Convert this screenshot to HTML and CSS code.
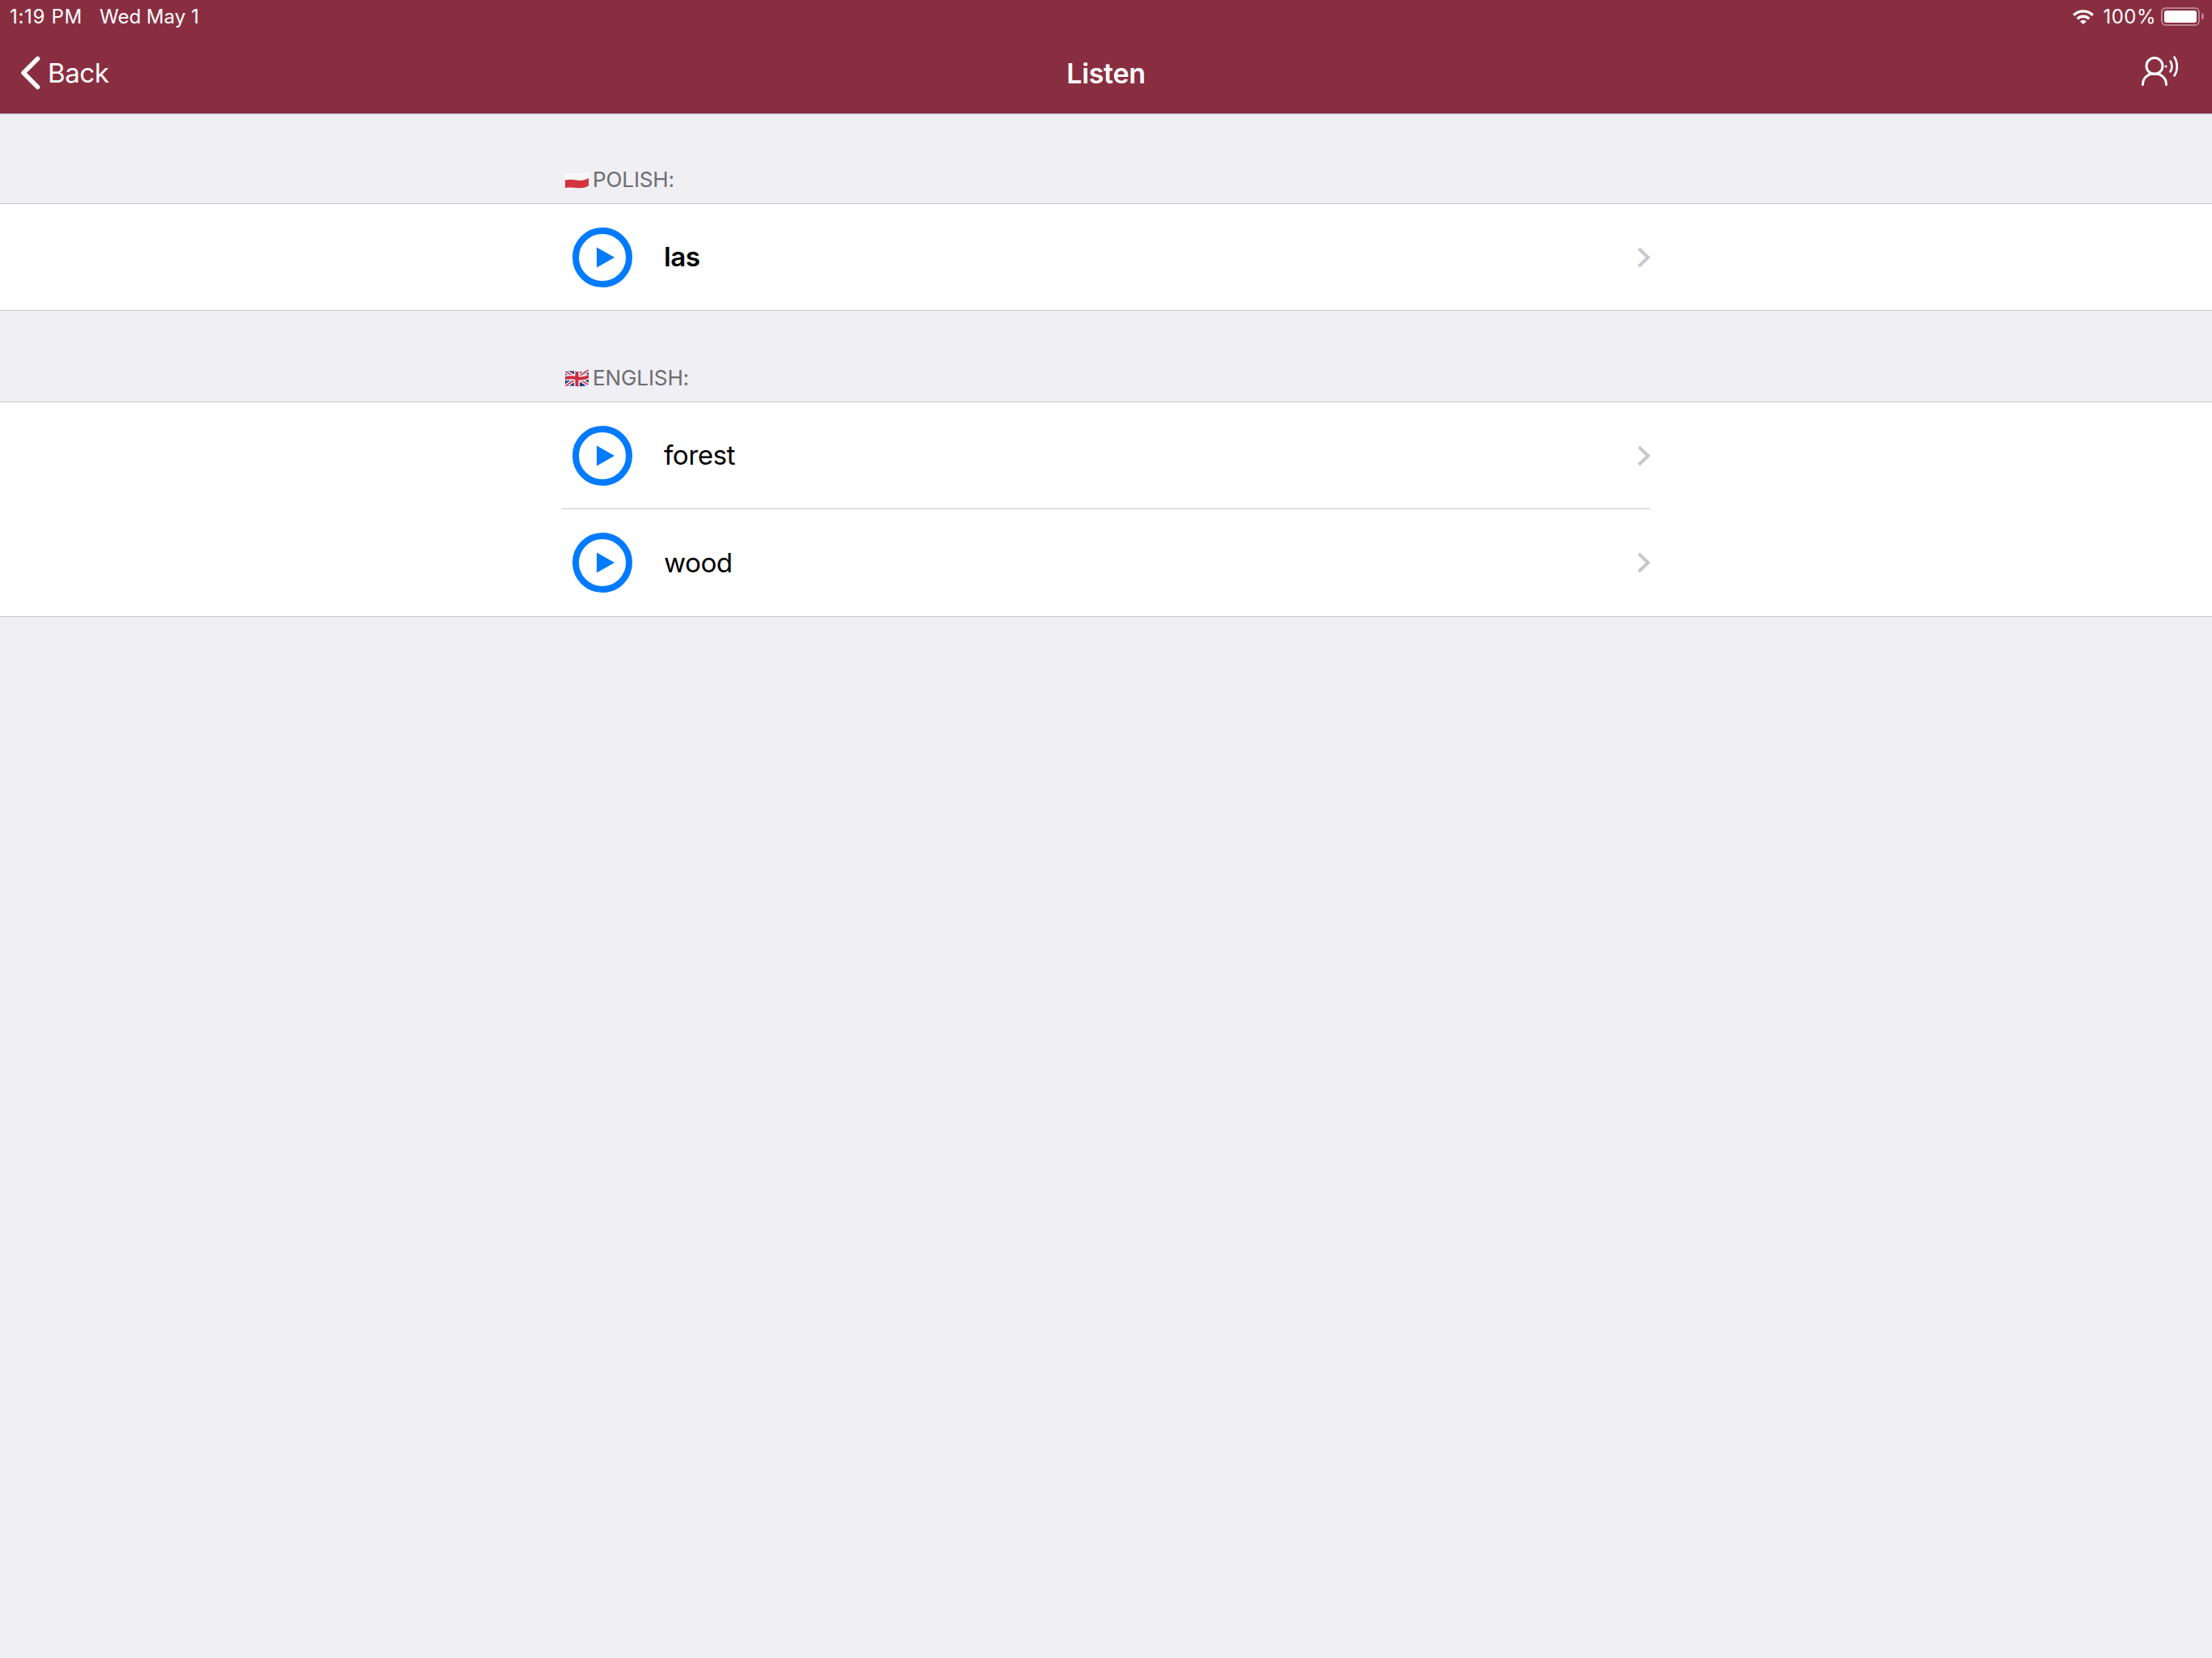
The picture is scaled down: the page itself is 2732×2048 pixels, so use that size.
FILE: index.html
```html
<!DOCTYPE html>
<html lang="en">
<head>
    <meta charset="UTF-8">
    <meta name="viewport" content="width=device-width, initial-scale=1.0">
    <title>Listen</title>
    <link rel="stylesheet" href="styles.css">
</head>
<body>
    <header class="topbar">
        <div class="status">
            <span class="time">1:19 PM</span>
            <span class="date">Wed May 1</span>
            <span class="status-right">
                <svg class="wifi" width="28" height="20" viewBox="0 0 28 20">
                    <path d="M1 7.500a18.500 18.500 0 0 1 26 0l-2.300 2.400a15.200 15.200 0 0 0-21.400 0z" fill="#fff"/>
                    <path d="M5.600 12a12 12 0 0 1 16.800 0l-2.300 2.400a8.700 8.700 0 0 0-12.200 0z" fill="#fff"/>
                    <path d="M10 16.500a5.700 5.700 0 0 1 8 0l-4 3.500z" fill="#fff"/>
                </svg>
                <span class="battery-text">100%</span>
                <span class="battery"><span class="battery-fill"></span></span>
                <span class="battery-nub"></span>
            </span>
        </div>
        <nav class="navbar">
            <a class="back">
                <svg width="26" height="42" viewBox="0 0 26 42">
                    <path d="M22.500 3.500 5 21l17.500 17.500" fill="none" stroke="#fff" stroke-width="5.500" stroke-linecap="round" stroke-linejoin="round"/>
                </svg>
                Back
            </a>
            <h1>Listen</h1>
            <div class="nav-right">
                <svg width="46" height="40" viewBox="0 0 46 40">
                    <circle cx="17" cy="13.500" r="10" fill="none" stroke="#fff" stroke-width="3"/>
                    <path d="M2.500 36.500c0-8 6-13.500 14.500-13.500s14.500 5.500 14.500 13.500" fill="none" stroke="#fff" stroke-width="3" stroke-linecap="round"/>
                    <circle cx="31" cy="14" r="1.500" fill="#fff"/>
                    <path d="M36.500 7.500c2.500 4 2.500 9 0 13" fill="none" stroke="#fff" stroke-width="2.600" stroke-linecap="round"/>
                    <path d="M41.500 2.500c4.500 7 4.500 16 0 23" fill="none" stroke="#fff" stroke-width="2.600" stroke-linecap="round"/>
                </svg>
            </div>
        </nav>
    </header>

    <section class="group">
        <h2 class="group-title">
            <svg class="flag" width="30" height="22" viewBox="0 0 30 22">
                <path d="M0 3c5-1 9-1 14 0s10 .5 15-2.500v9c-5 3-10 3-15 2.500s-9-1-14 0z" fill="#f9f6f6"/>
                <path d="M0 11.500c5-1 9-1 14 0s10 .5 15-2.500v9.500c-5 3-10 3-15 2.500s-9-1-14 0z" fill="#d5343f"/>
            </svg>
            POLISH:
        </h2>
        <ul class="rows">
            <li class="row">
                <div class="row-inner">
                    <svg class="play" width="74" height="74" viewBox="0 0 74 74">
                        <circle cx="37" cy="37" r="33" fill="none" stroke="#007aff" stroke-width="8"/>
                        <path d="M30 24.500 52 37 30 49.500z" fill="#007aff"/>
                    </svg>
                    <span class="word word-main">las</span>
                    <svg class="chevron" width="16" height="26" viewBox="0 0 16 26">
                        <path d="M2 2l11.500 11L2 24" fill="none" stroke="#c7c7cc" stroke-width="4"/>
                    </svg>
                </div>
            </li>
        </ul>
    </section>

    <section class="group group-next">
        <h2 class="group-title">
            <svg class="flag" width="30" height="22" viewBox="0 0 30 22">
                <clipPath id="ukClip">
                    <path d="M0 3c5-1 9-1 14 0s10 .5 15-2.500v18c-5 3-10 3-15 2.500s-9-1-14 0z"/>
                </clipPath>
                <g clip-path="url(#ukClip)">
                    <rect width="30" height="22" fill="#23397c"/>
                    <path d="M-1 2 30 20M30 0-1 22" stroke="#f4f1f1" stroke-width="4.500"/>
                    <path d="M-1 2 30 20M30 0-1 22" stroke="#cf2b3f" stroke-width="1.500"/>
                    <path d="M14.500 0v22M0 11c5-1 9-1 14 0s10 .5 15-2" fill="none" stroke="#f4f1f1" stroke-width="7"/>
                    <path d="M14.500 0v22M0 11c5-1 9-1 14 0s10 .5 15-2" fill="none" stroke="#cf2b3f" stroke-width="4"/>
                </g>
            </svg>
            ENGLISH:
        </h2>
        <ul class="rows">
            <li class="row">
                <div class="row-inner has-line">
                    <svg class="play" width="74" height="74" viewBox="0 0 74 74">
                        <circle cx="37" cy="37" r="33" fill="none" stroke="#007aff" stroke-width="8"/>
                        <path d="M30 24.500 52 37 30 49.500z" fill="#007aff"/>
                    </svg>
                    <span class="word">forest</span>
                    <svg class="chevron" width="16" height="26" viewBox="0 0 16 26">
                        <path d="M2 2l11.500 11L2 24" fill="none" stroke="#c7c7cc" stroke-width="4"/>
                    </svg>
                </div>
            </li>
            <li class="row">
                <div class="row-inner row-last">
                    <svg class="play" width="74" height="74" viewBox="0 0 74 74">
                        <circle cx="37" cy="37" r="33" fill="none" stroke="#007aff" stroke-width="8"/>
                        <path d="M30 24.500 52 37 30 49.500z" fill="#007aff"/>
                    </svg>
                    <span class="word">wood</span>
                    <svg class="chevron" width="16" height="26" viewBox="0 0 16 26">
                        <path d="M2 2l11.500 11L2 24" fill="none" stroke="#c7c7cc" stroke-width="4"/>
                    </svg>
                </div>
            </li>
        </ul>
    </section>
</body>
</html>
```

FILE: styles.css
```css
html, body {
    margin: 0;
    padding: 0;
}
body {
    min-height: 2048px;
    background-color: #efeff4;
    font-family: Inter, "Liberation Sans", sans-serif;
    color: #000;
}
.topbar {
    height: 140px;
    background-color: #892e41;
    border-bottom: 1px solid #a9a9b2;
    color: #fff;
}
.status {
    height: 40px;
    display: flex;
    align-items: center;
    padding: 0 10px 0 12px;
    font-size: 24px;
}
.time {
    letter-spacing: 0.7px;
}
.date {
    margin-left: 21px;
}
.status-right {
    margin-left: auto;
    display: flex;
    align-items: center;
}
.battery-text {
    margin-left: 10px;
    letter-spacing: 0.5px;
}
.battery {
    box-sizing: border-box;
    width: 48px;
    height: 23px;
    margin-left: 6px;
    padding: 2px;
    border: 2px solid rgba(255, 255, 255, 0.4);
    border-radius: 6px;
    display: flex;
}
.battery-fill {
    flex: 1;
    background-color: #fff;
    border-radius: 3px;
}
.battery-nub {
    width: 3px;
    height: 8px;
    margin-left: 2px;
    background-color: rgba(255, 255, 255, 0.4);
    border-radius: 0 3px 3px 0;
}
.navbar {
    height: 100px;
    display: grid;
    grid-template-columns: 1fr auto 1fr;
    align-items: center;
}
.back {
    display: flex;
    align-items: center;
    gap: 9px;
    padding-left: 24px;
    font-size: 33px;
    letter-spacing: -0.4px;
}
.navbar h1 {
    margin: 0;
    font-size: 34px;
    font-weight: 600;
    letter-spacing: -0.3px;
}
.nav-right {
    display: flex;
    justify-content: flex-end;
    padding-right: 42px;
    margin-bottom: 4px;
}
.group-title {
    height: 110px;
    box-sizing: border-box;
    margin: 0;
    padding: 0 0 8px 698px;
    display: flex;
    align-items: flex-end;
    gap: 4px;
    font-size: 26px;
    font-weight: 400;
    line-height: 42px;
    letter-spacing: -0.1px;
    color: #6d6d72;
}
.group-next .group-title {
    height: 112px;
}
.flag {
    margin-bottom: 10px;
}
.rows {
    list-style: none;
    margin: 0;
    padding: 0;
    background-color: #fff;
    border-top: 1px solid #c8c7cc;
    border-bottom: 1px solid #c8c7cc;
}
.row {
    padding: 0 694px;
}
.row-inner {
    height: 131px;
    display: flex;
    align-items: center;
    padding-left: 13px;
}
.has-line {
    border-bottom: 1px solid #c8c7cc;
}
.row-last {
    height: 132px;
}
.word {
    margin-left: 39px;
    font-size: 33px;
    letter-spacing: -0.4px;
    margin-bottom: 1px;
}
.word-main {
    font-weight: 600;
}
.chevron {
    margin-left: auto;
}
```
